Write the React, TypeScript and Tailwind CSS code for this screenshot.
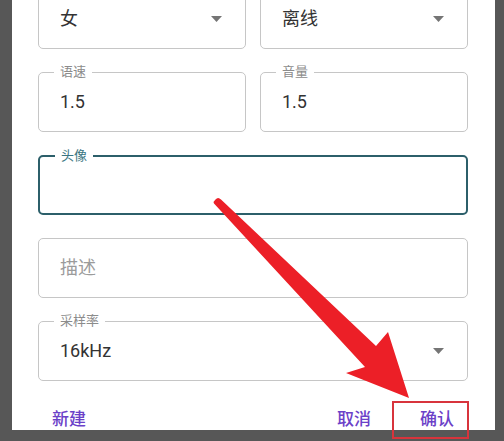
import React from "react";

const font = { fontFamily: 'Roboto, "Noto Sans CJK SC", "Noto Sans", sans-serif' };

function Caret() {
  return (
    <svg width="11" height="6" viewBox="0 0 11 6" className="shrink-0">
      <path d="M0 0 L11 0 L5.5 6 Z" fill="#757575" />
    </svg>
  );
}

function Field({
  label,
  value,
  placeholder,
  select,
  focused,
}: {
  label?: string;
  value?: string;
  placeholder?: string;
  select?: boolean;
  focused?: boolean;
}) {
  return (
    <div
      className={
        "relative h-[60px] rounded-[5px] flex items-center pl-[21px] pr-[23px] " +
        (focused ? "border-2 border-[#2c5f6a] pl-[20px]" : "border border-[#c6c6c6]")
      }
    >
      {label && (
        <span
          className={
            "absolute -top-[9px] left-[15px] bg-white px-[6px] text-[13px] leading-[16px] " +
            (focused ? "text-[#3a7581]" : "text-[#8c8c8c]")
          }
        >
          {label}
        </span>
      )}
      <span className={"flex-1 text-[18px] leading-[24px] " + (value ? "text-[#333]" : "text-[#9b9b9b]")}>
        {value ?? placeholder}
      </span>
      {select && <Caret />}
    </div>
  );
}

export default function App() {
  return (
    <div className="relative w-[504px] h-[441px] overflow-hidden bg-[#575757]" style={font}>
      <div className="ml-[12px] w-[483px] h-full bg-white pl-[26px] pr-[27px]">
        <div className="-mt-[11px] flex flex-col gap-[23px]">
          <div className="grid grid-cols-2 gap-[14px]">
            <Field value="女" select />
            <Field value="离线" select />
          </div>
          <div className="grid grid-cols-2 gap-[14px]">
            <Field label="语速" value="1.5" />
            <Field label="音量" value="1.5" />
          </div>
          <Field label="头像" focused />
          <Field placeholder="描述" />
          <Field label="采样率" value="16kHz" select />
        </div>
        <div className="mt-[20px] -mr-[1px] flex items-center pl-[14px] text-[17px] font-medium text-[#6b41c8]">
          <span className="flex-1">新建</span>
          <span className="mr-[21px]">取消</span>
          <span className="w-[77px] h-[38px] border-2 border-[#d8343c] flex items-center justify-end pr-[13px]">
            确认
          </span>
        </div>
      </div>
      <svg className="absolute inset-0 pointer-events-none" width="504" height="441" viewBox="0 0 504 441">
        <path
          d="M215.5,199.5 Q218,196.5 221,199.5 L376,346 L388,332 L409,398 L346,373 L365,367 L214,203.5 Q213,201.5 215.5,199.5 Z"
          fill="#ec1f27"
        />
      </svg>
    </div>
  );
}
